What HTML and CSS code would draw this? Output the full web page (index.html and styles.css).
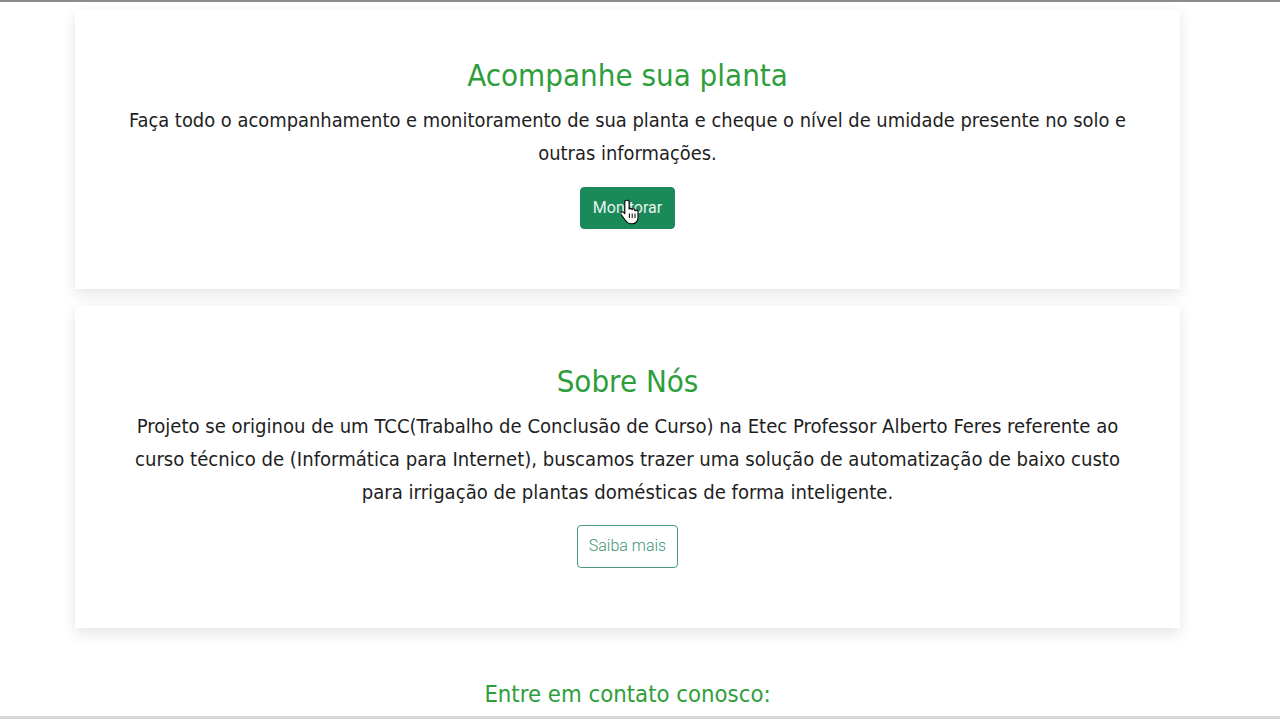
FILE: index.html
```html
<!DOCTYPE html>
<html lang="pt-BR">
<head>
<meta charset="utf-8">
<title>Acompanhe sua planta</title>
<link rel="stylesheet" href="styles.css">
</head>
<body>
<div class="topbar"></div>
<main class="page">
  <section class="card card-first">
    <h2 class="card-title">Acompanhe sua planta</h2>
    <p class="card-text">Faça todo o acompanhamento e monitoramento de sua planta e cheque o nível de umidade presente no solo e outras informações.</p>
    <div class="btn-wrap">
      <a class="btn btn-success" href="#">Monitorar</a>
      <svg class="cursor" width="18" height="26" viewBox="0 0 18 26" aria-hidden="true">
        <path d="M5.5 1.2c-1 0-1.7.8-1.7 1.8v11.6L2.6 13.3c-.8-.8-2-.8-2.6 0-.5.6-.4 1.5.1 2.2l4.6 6.3c1.3 1.8 3.1 2.9 5.5 2.9h1.2c3.2 0 5.6-2.6 5.6-5.8v-6.1c0-1-.7-1.7-1.6-1.7-.6 0-1.1.3-1.4.8v-.4c0-1-.7-1.7-1.6-1.7-.6 0-1.2.4-1.4.9-.2-.8-.9-1.3-1.600-1.3-.6 0-1 .3-1.3.6V3c0-1-.8-1.8-1.7-1.8z" fill="#fff" stroke="#000" stroke-width="1.1" stroke-linejoin="round"/>
        <path d="M8.4 14.5v4.6M11.2 14.5v4.6M14 14.5v4.6" stroke="#000" stroke-width="1" fill="none"/>
      </svg>
    </div>
  </section>
  <section class="card card-second">
    <h2 class="card-title">Sobre Nós</h2>
    <p class="card-text">Projeto se originou de um TCC(Trabalho de Conclusão de Curso) na Etec Professor Alberto Feres referente ao curso técnico de (Informática para Internet), buscamos trazer uma solução de automatização de baixo custo para irrigação de plantas domésticas de forma inteligente.</p>
    <div class="btn-wrap">
      <a class="btn btn-outline" href="#">Saiba mais</a>
    </div>
  </section>
  <h3 class="contact-title">Entre em contato conosco:</h3>
</main>
<div class="bottombar"></div>
</body>
</html>
```
FILE: styles.css
```css
html, body {
  margin: 0;
  padding: 0;
  background: #ffffff;
}
body {
  height: 719px;
  overflow: hidden;
  font-family: "DejaVu Sans Condensed", "DejaVu Sans", sans-serif;
  color: #1e1e1e;
}
.topbar {
  height: 2px;
  background: #8c8c8c;
}
.page {
  padding: 8px 100px 0 75px;
  display: flex;
  flex-direction: column;
}
.card {
  background: #ffffff;
  box-shadow: 0 5px 14px rgba(0, 0, 0, 0.11);
  padding: 56px 48px 60px;
  text-align: center;
  display: flex;
  flex-direction: column;
  align-items: center;
}
.card-first {
  padding-top: 46px;
  margin-bottom: 17px;
}
.card-first .card-text {
  font-size: 19.9px;
}
.card-second .card-text {
  margin-bottom: 16px;
  font-size: 20.1px;
}
.card-title {
  margin: 0 0 10px;
  font-size: 31px;
  line-height: 38px;
  font-weight: normal;
  color: #2e9e3b;
}
.card-text {
  margin: 0 0 17px;
  font-size: 20px;
  line-height: 33px;
}
.btn-wrap {
  position: relative;
}
.btn {
  display: inline-block;
  font-family: Roboto, "Liberation Sans", sans-serif;
  font-size: 16px;
  line-height: 24px;
  padding: 8px 12px;
  border-radius: 4px;
  text-decoration: none;
  border: 1px solid #1b8a5a;
}
.btn-success {
  background: #1b8a5a;
  color: #e6f3ec;
}
.btn-outline {
  background: #ffffff;
  color: #3d9473;
  border-color: #4a9a7c;
  font-weight: 300;
  padding: 8px 11px 9px;
}
.cursor {
  position: absolute;
  left: 41px;
  top: 12px;
}
.contact-title {
  margin: 52px 0 0;
  text-align: center;
  font-size: 23.7px;
  line-height: 29px;
  font-weight: normal;
  color: #2e9e3b;
}
.bottombar {
  position: absolute;
  left: 0;
  right: 0;
  top: 716px;
  height: 3px;
  background: #d6d6d6;
}
```
